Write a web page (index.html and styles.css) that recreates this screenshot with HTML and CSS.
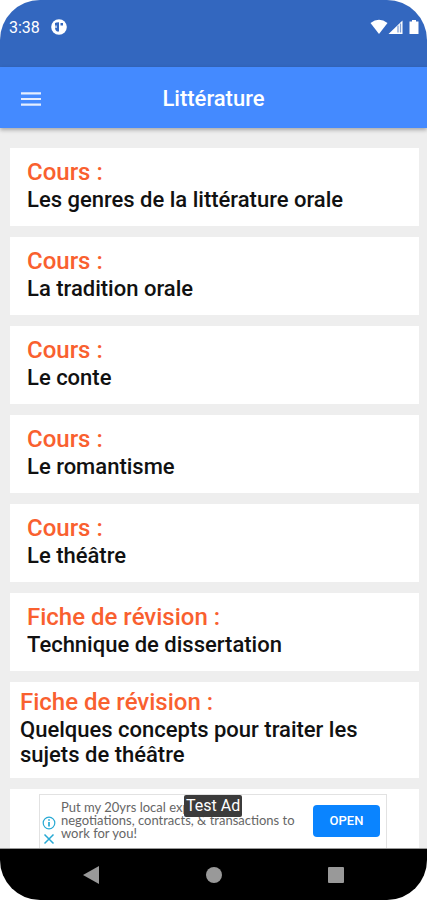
FILE: index.html
```html
<!DOCTYPE html>
<html lang="fr">
<head>
<meta charset="utf-8">
<meta name="viewport" content="width=device-width, initial-scale=1">
<title>Littérature</title>
<link rel="stylesheet" href="styles.css">
</head>
<body>
<div class="screen">
  <div class="status">
    <span class="clock">3:38</span>
    <svg class="app-icon" width="16" height="16" viewBox="0 0 16 16" aria-hidden="true">
      <circle cx="8" cy="8" r="7.8" fill="#fff"/>
      <path d="M4 4Q5 3.200 8 3.200V12.500H6Q4 11 4 9zM9.500 4h2.500v2.500H9.500z" fill="#3367bf"/>
      <path d="M5 6.500V9" stroke="#fff" stroke-width="1.200"/>
    </svg>
    <svg class="signals" width="50" height="16" viewBox="0 0 50 16" aria-hidden="true">
      <path d="M0.500 4Q9-2.500 17.500 4L9 15z" fill="#fff"/>
      <path d="M32.500 1.500V15H18.500z" fill="#fff"/>
      <path d="M28 6.500V13.500M30.500 4.500V13.500" stroke="#7f9fd6" stroke-width="1.300"/>
      <path d="M42 1h4v1.500h2.500V15h-9V2.500H42z" fill="#fff"/>
    </svg>
  </div>
  <header class="appbar">
    <button class="menu" type="button" aria-label="Menu">
      <svg width="20" height="14" viewBox="0 0 20 14" aria-hidden="true"><path d="M0 1.300h20M0 7h20M0 12.700h20" stroke="#e4edff" stroke-width="2.200"/></svg>
    </button>
    <h1 class="title">Littérature</h1>
  </header>
  <main class="content">
    <ul class="list">
      <li><a class="card" href="#"><span class="kind">Cours :</span><span class="name">Les genres de la littérature orale</span></a></li>
      <li><a class="card" href="#"><span class="kind">Cours :</span><span class="name">La tradition orale</span></a></li>
      <li><a class="card" href="#"><span class="kind">Cours :</span><span class="name">Le conte</span></a></li>
      <li><a class="card" href="#"><span class="kind">Cours :</span><span class="name">Le romantisme</span></a></li>
      <li><a class="card" href="#"><span class="kind">Cours :</span><span class="name">Le théâtre</span></a></li>
      <li><a class="card" href="#"><span class="kind">Fiche de révision :</span><span class="name">Technique de dissertation</span></a></li>
      <li><a class="card card-long" href="#"><span class="kind">Fiche de révision :</span><span class="name">Quelques concepts pour traiter les sujets de théâtre</span></a></li>
      <li><a class="card" href="#" aria-label="Suivant"></a></li>
    </ul>
    <aside class="ad">
      <div class="ad-marks">
        <svg width="14" height="14" viewBox="0 0 14 14" aria-hidden="true"><circle cx="7" cy="7" r="5.800" fill="none" stroke="#27a9d4" stroke-width="1.200"/><path d="M7 6v4.500M7 3.300v1.500" stroke="#27a9d4" stroke-width="1.700"/></svg>
        <svg width="14" height="14" viewBox="0 0 14 14" aria-hidden="true"><path d="M2.500 2.500l9 9M11.500 2.500l-9 9" stroke="#27a9d4" stroke-width="1.500"/></svg>
      </div>
      <p class="ad-text">Put my 20yrs local exp<br>negotiations, contracts, &amp; transactions to<br>work for you!</p>
      <button class="open" type="button">OPEN</button>
      <span class="badge">Test Ad</span>
    </aside>
  </main>
  <nav class="nav">
    <button type="button" aria-label="Retour"><svg width="18" height="20" viewBox="0 0 18 20" aria-hidden="true"><path d="M0 10L16 1v18z" fill="#999"/></svg></button>
    <button type="button" aria-label="Accueil"><svg width="18" height="18" viewBox="0 0 18 18" aria-hidden="true"><circle cx="9" cy="9" r="8" fill="#999"/></svg></button>
    <button type="button" aria-label="Aperçu"><svg width="18" height="18" viewBox="0 0 18 18" aria-hidden="true"><rect x="1" y="1" width="16" height="16" rx="1" fill="#999"/></svg></button>
  </nav>
</div>
</body>
</html>
```
FILE: styles.css
```css
* { box-sizing: border-box; }
body { margin: 0; background: #fff; font-family: Roboto, "Liberation Sans", sans-serif; }
button { border: 0; padding: 0; background: none; font: inherit; line-height: 0; }

.screen { display: flex; flex-direction: column; height: 100vh; border-radius: 40px; overflow: hidden; background: #eee; }

.status { flex: none; display: flex; align-items: flex-start; height: 67px; padding: 19px 7px 0 9px; background: #3367bf; color: #fff; }
.clock { font-size: 16px; line-height: 18px; }
.app-icon { margin-left: 11px; }
.signals { margin-left: auto; }

.appbar { flex: none; z-index: 1; display: grid; grid-template-columns: 41px 1fr 41px; align-items: center; height: 61px; padding: 2px 0 0; background: #448aff; box-shadow: 0 2px 4px rgba(0, 0, 0, 0.3); }
.menu { padding-left: 21px; }
.title { margin: 0; color: #fff; font-size: 22px; font-weight: 500; line-height: 28px; text-align: center; }

.content { position: relative; flex: 1; min-height: 0; overflow: hidden; }
.list { display: flex; flex-direction: column; gap: 11px; margin: 0; padding: 20px 8px 0 10px; list-style: none; }
.card { display: flex; flex-direction: column; min-height: 78px; padding: 10px 17px 12px; background: #fff; color: #111; text-decoration: none; }
.card-long { padding: 6px 10px 11px; }
.kind { color: #f9602f; font-size: 24px; font-weight: 500; line-height: 29px; }
.name { font-size: 22px; font-weight: 500; line-height: 25px; }

.ad { position: absolute; bottom: 0; left: 39px; right: 40px; display: flex; height: 54px; border: 1px solid #e2e2e2; border-bottom: 0; background: #fff; }
.ad-marks { display: flex; flex-direction: column; gap: 2px; width: 21px; padding: 21px 0 0 2px; }
.ad-text { flex: 1; min-width: 0; margin: 0; padding-top: 6px; color: #666; font-family: Lato, sans-serif; font-size: 13px; line-height: 13px; white-space: nowrap; }
.open { width: 67px; height: 32px; margin: 10px 6px 0 8px; border-radius: 4px; background: #0a84ff; color: #fff; font-size: 13px; font-weight: 500; line-height: 16px; }
.badge { position: absolute; top: 0; left: 144px; padding: 1px 2px; border-radius: 2px; background: #3b3b3b; color: #fff; font-size: 16px; line-height: 20px; }

.nav { flex: none; display: flex; justify-content: center; align-items: center; gap: 104px; height: 52px; border-top: 1px solid #999; background: #000; }
```
